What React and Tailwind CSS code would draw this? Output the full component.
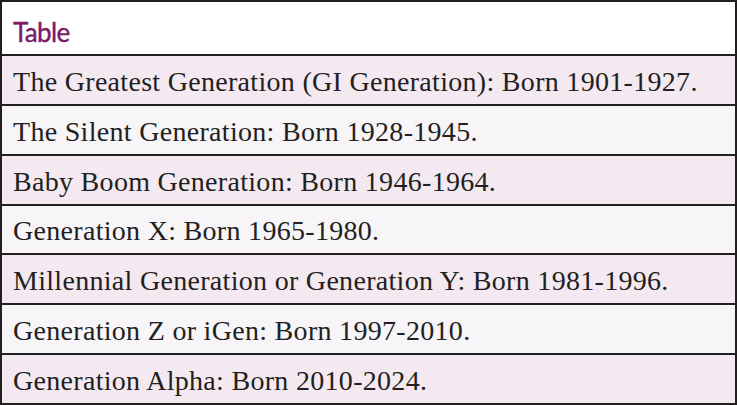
import React from "react";

const rows = [
  "The Greatest Generation (GI Generation): Born 1901-1927.",
  "The Silent Generation: Born 1928-1945.",
  "Baby Boom Generation: Born 1946-1964.",
  "Generation X: Born 1965-1980.",
  "Millennial Generation or Generation Y: Born 1981-1996.",
  "Generation Z or iGen: Born 1997-2010.",
  "Generation Alpha: Born 2010-2024.",
];

export default function App() {
  return (
    <div className="w-[737px] h-[405px] bg-white">
      <div className="w-[737px] h-[405px] border-2 border-[#231f20] flex flex-col">
        <div className="flex-1 flex items-center pl-[11px] pt-[8px] bg-white">
          <span
            className="text-[26px] leading-none text-[#7a1b68] tracking-[-0.6px]"
            style={{ fontFamily: "Lato, 'Open Sans', sans-serif", WebkitTextStroke: "0.4px #7a1b68" }}
          >
            Table
          </span>
        </div>
        {rows.map((r, i) => (
          <div
            key={i}
            className={
              "flex-1 flex items-center pl-[11px] pt-[4px] border-t-2 border-[#231f20] " +
              (i % 2 === 0 ? "bg-[#f4e9f0]" : "bg-[#f7f5f8]")
            }
          >
            <span
              className="text-[28px] leading-none text-[#231f20] whitespace-nowrap tracking-[0.3px]"
              style={{ fontFamily: "'Liberation Serif', serif" }}
            >
              {r}
            </span>
          </div>
        ))}
      </div>
    </div>
  );
}
